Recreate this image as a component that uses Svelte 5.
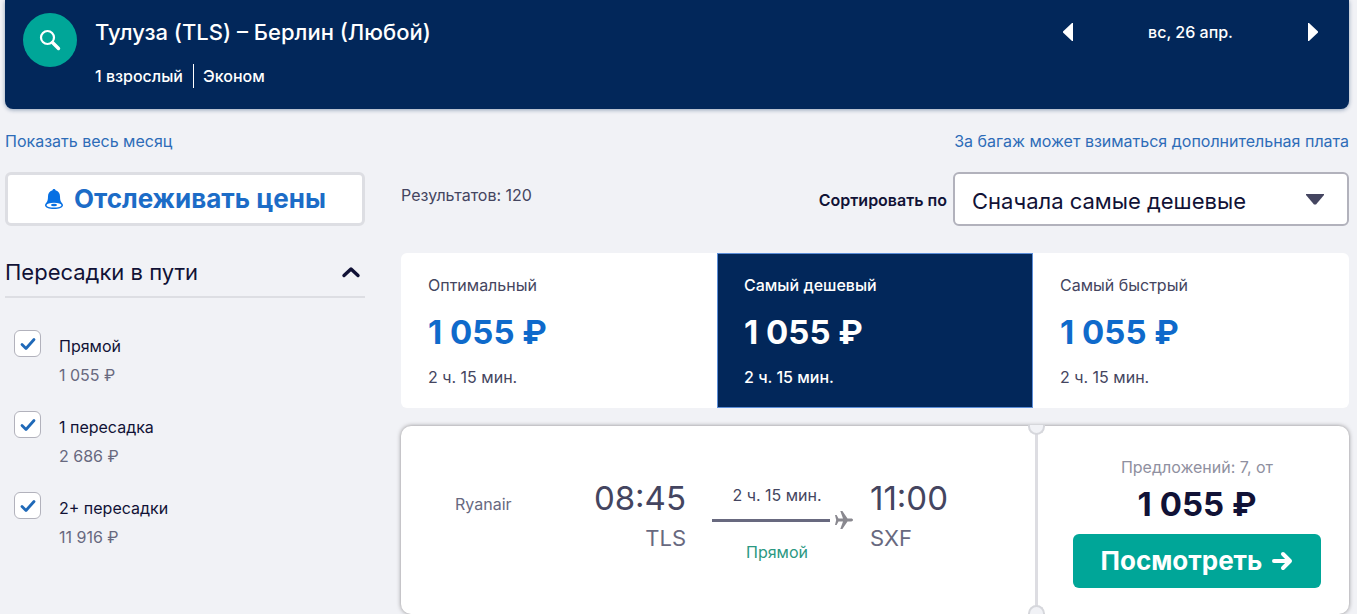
<script lang="ts">
	interface Stop {
		id: string;
		label: string;
		price: string;
		checked: boolean;
	}

	let stops: Stop[] = $state([
		{ id: 'direct', label: 'Прямой', price: '1 055 ₽', checked: true },
		{ id: 'one', label: '1 пересадка', price: '2 686 ₽', checked: true },
		{ id: 'two', label: '2+ пересадки', price: '11 916 ₽', checked: true }
	]);

	const tabs = [
		{ id: 'best', label: 'Оптимальный', price: '1 055 ₽', duration: '2 ч. 15 мин.' },
		{ id: 'cheapest', label: 'Самый дешевый', price: '1 055 ₽', duration: '2 ч. 15 мин.' },
		{ id: 'fastest', label: 'Самый быстрый', price: '1 055 ₽', duration: '2 ч. 15 мин.' }
	];

	let sort = $state('cheapest');
	let stopsOpen = $state(true);
</script>

<div class="page">
	<header class="search">
		<button class="search-btn" aria-label="Изменить поиск">
			<svg width="22" height="22" viewBox="0 0 22 22" fill="none" stroke="#fff">
				<circle cx="8.5" cy="8.5" r="6.5" stroke-width="2.2" />
				<path d="M13.5 13.5L19.5 19.5" stroke-width="3.4" stroke-linecap="round" />
			</svg>
		</button>
		<div class="trip">
			<h1>Тулуза (TLS) – Берлин (Любой)</h1>
			<p><span>1 взрослый</span><span class="cabin">Эконом</span></p>
		</div>
		<div class="date">
			<button aria-label="Предыдущий день">
				<svg width="12" height="20" viewBox="0 0 12 20"><path d="M11 1v18h-1L1 10.6V9.4L10 1z" fill="#fff" /></svg>
			</button>
			<span>вс, 26 апр.</span>
			<button aria-label="Следующий день">
				<svg width="12" height="20" viewBox="0 0 12 20"><path d="M1 1v18h1l9-8.400V9.400L2 1z" fill="#fff" /></svg>
			</button>
		</div>
	</header>

	<nav class="links">
		<a href="#month">Показать весь месяц</a>
		<a href="#baggage">За багаж может взиматься дополнительная плата</a>
	</nav>

	<div class="columns">
		<aside>
			<button class="track">
				<svg width="20" height="22" viewBox="0 0 20 22">
					<path
						d="M10 1c.9 0 1.500.6 1.500 1.300C14.800 3.200 16 5.800 16 8.500c0 4 .8 5.500 2.300 7 .5.600.7 1.200.7 1.700 0 2.200-4 3.800-9 3.800s-9-1.600-9-3.800c0-.5.2-1.100.7-1.700C3.200 14 4 12.500 4 8.500c0-2.700 1.200-5.300 4.500-6.200C8.500 1.600 9.100 1 10 1z"
						fill="#0770e3"
					/>
					<ellipse cx="10" cy="17.2" rx="7.5" ry="2.4" fill="#fff" />
					<ellipse cx="10" cy="17" rx="3" ry="1.3" fill="#0770e3" />
				</svg>
				Отслеживать цены
			</button>

			<button class="group" aria-expanded={stopsOpen} onclick={() => (stopsOpen = !stopsOpen)}>
				Пересадки в пути
				<svg class:closed={!stopsOpen} width="20" height="14" viewBox="0 0 20 14" fill="none">
					<path d="M3 10.500L10 4l7 6.500" stroke="#111236" stroke-width="3.4" stroke-linecap="round" stroke-linejoin="round" />
				</svg>
			</button>

			{#if stopsOpen}
				<ul class="stops">
					{#each stops as stop (stop.id)}
						<li>
							<input type="checkbox" id={stop.id} bind:checked={stop.checked} />
							<label for={stop.id}>
								{stop.label}
								<span>{stop.price}</span>
							</label>
						</li>
					{/each}
				</ul>
			{/if}
		</aside>

		<main>
			<div class="toolbar">
				<span class="count">Результатов: 120</span>
				<label for="sort">Сортировать по</label>
				<select id="sort" bind:value={sort}>
					<option value="best">Сначала оптимальные</option>
					<option value="cheapest">Сначала самые дешевые</option>
					<option value="fastest">Сначала самые быстрые</option>
				</select>
			</div>

			<div class="tabs">
				{#each tabs as tab (tab.id)}
					<button class="tab" class:active={sort === tab.id} onclick={() => (sort = tab.id)}>
						<span>{tab.label}</span>
						<strong>{tab.price}</strong>
						<span>{tab.duration}</span>
					</button>
				{/each}
			</div>

			<article class="ticket">
				<div class="flight">
					<span class="carrier">Ryanair</span>
					<div class="point departure">
						<time>08:45</time>
						<span>TLS</span>
					</div>
					<div class="route">
						<span class="duration">2 ч. 15 мин.</span>
						<div class="track-line">
							<i></i>
							<svg width="20" height="20" viewBox="0 0 20 20">
								<path
									d="M1 5h1.600L4.500 8.600H9L6.300 1h2.100l5.100 7.600h3.700c1 0 1.800.6 1.800 1.400s-.8 1.400-1.800 1.400h-3.700L8.400 19H6.300L9 11.400H4.500L2.600 15H1l1.200-5z"
									fill="#89888f"
								/>
							</svg>
						</div>
						<span class="direct">Прямой</span>
					</div>
					<div class="point">
						<time>11:00</time>
						<span>SXF</span>
					</div>
				</div>
				<div class="offer">
					<span>Предложений: 7, от</span>
					<strong>1 055 ₽</strong>
					<button>
						Посмотреть
						<svg width="22" height="20" viewBox="0 0 22 20" fill="none" stroke="#fff" stroke-width="4" stroke-linecap="round" stroke-linejoin="round">
							<path d="M3 10h15M12 3l7 7-7 7" />
						</svg>
					</button>
				</div>
			</article>
		</main>
	</div>
</div>

<style>
	:global(body) {
		background: #f1f2f6;
	}

	.page {
		padding: 0 8px 0 5px;
		font-family: Inter, 'Liberation Sans', sans-serif;
		font-size: 16px;
		line-height: 24px;
		color: #111236;
		overflow: hidden;
	}

	button {
		padding: 0;
		border: 0;
		background: none;
		color: inherit;
		font: inherit;
		cursor: pointer;
	}

	svg {
		display: block;
		flex: none;
	}

	.search {
		display: flex;
		align-items: flex-start;
		gap: 18px;
		padding: 13px 30px 21px 18px;
		border-radius: 0 0 8px 8px;
		background: #02275a;
		box-shadow: 0 1px 4px rgba(2, 39, 90, 0.4);
		color: #fff;
	}

	.search-btn {
		display: flex;
		align-items: center;
		justify-content: center;
		width: 54px;
		height: 54px;
		border-radius: 50%;
		background: #00a698;
	}

	.trip {
		flex: 1;
	}

	h1 {
		margin: 3px 0 16px;
		font-size: 22px;
		line-height: 32px;
		font-weight: 500;
	}

	.trip p {
		display: flex;
		margin: 0;
		font-weight: 500;
	}

	.cabin {
		margin-left: 10px;
		padding-left: 9px;
		border-left: 1px solid #fff;
	}

	.date {
		display: flex;
		align-items: center;
		justify-content: space-between;
		width: 257px;
		margin-top: 7px;
		font-weight: 500;
	}

	.links {
		display: flex;
		justify-content: space-between;
		padding: 20px 0 19px;
	}

	.links a {
		color: #2d6cb8;
		text-decoration: none;
	}

	.columns {
		display: flex;
		gap: 36px;
	}

	aside {
		flex: none;
		width: 360px;
	}

	.track {
		display: flex;
		align-items: center;
		justify-content: center;
		gap: 10px;
		width: 100%;
		height: 54px;
		border: 3px solid #dddee3;
		border-radius: 6px;
		background: #fff;
		color: #1c6cc7;
		font-size: 26px;
		font-weight: 700;
	}

	.group {
		display: flex;
		align-items: center;
		justify-content: space-between;
		width: 100%;
		margin-top: 20px;
		padding: 11px 4px 9px 0;
		border-bottom: 2px solid #dddee3;
		font-size: 22px;
		line-height: 30px;
	}

	.closed {
		transform: rotate(180deg);
	}

	.stops {
		display: flex;
		flex-direction: column;
		gap: 24px;
		margin: 0;
		padding: 32px 0 0 9px;
		list-style: none;
	}

	.stops li {
		display: flex;
		gap: 18px;
	}

	.stops input {
		appearance: none;
		flex: none;
		width: 27px;
		height: 27px;
		margin: 0;
		border: 1px solid #b2b2bc;
		border-radius: 6px;
		background: #fff;
	}

	.stops input:checked {
		background: #fff
			url("data:image/svg+xml,%3Csvg xmlns='http://www.w3.org/2000/svg' viewBox='0 0 18 16'%3E%3Cpath d='M3 8.5l4 4L15 3.5' fill='none' stroke='%231f69b8' stroke-width='2.8' stroke-linecap='round' stroke-linejoin='round'/%3E%3C/svg%3E")
			center / 18px 16px no-repeat;
	}

	.stops label {
		padding-top: 4px;
	}

	.stops label span {
		display: block;
		margin-top: 5px;
		color: #68697f;
	}

	.toolbar {
		display: flex;
		align-items: center;
		gap: 6px;
	}

	main {
		flex: 1;
		min-width: 0;
	}

	.count {
		flex: 1;
		align-self: flex-start;
		margin-top: 11px;
		color: #444560;
	}

	.toolbar label {
		padding-top: 2px;
		font-weight: 600;
	}

	select {
		appearance: none;
		width: 396px;
		height: 54px;
		padding: 3px 48px 0 17px;
		border: 2px solid #b2b2bc;
		border-radius: 6px;
		background: #fff
			url("data:image/svg+xml,%3Csvg xmlns='http://www.w3.org/2000/svg' viewBox='0 0 20 11'%3E%3Cpath d='M1 0h18v1L11 10.500H9L1 1z' fill='%23444560'/%3E%3C/svg%3E")
			right 22px center / 20px 11px no-repeat;
		color: #111236;
		font: inherit;
		font-size: 22px;
	}

	.tabs {
		display: flex;
		margin: 27px 0 18px;
		border-radius: 6px;
		background: #fff;
	}

	.tab {
		display: flex;
		flex: 1;
		flex-direction: column;
		padding: 19px 26px 18px;
		border: 1px solid transparent;
		color: #444560;
		text-align: left;
	}

	.tab strong {
		margin: 15px 0 13px;
		color: #0f6acb;
		font-size: 33px;
		line-height: 40px;
		font-weight: 700;
	}

	.tab.active {
		border-color: #5c8ed8;
		background: #02275a;
		color: #fff;
		font-weight: 500;
	}

	.tab.active strong {
		color: #fff;
	}

	.ticket {
		display: flex;
		height: 188px;
		border-radius: 10px;
		background: #fff;
		box-shadow: 0 0 4px rgba(37, 32, 31, 0.5);
	}

	.flight {
		display: flex;
		flex: 1;
		padding: 52px 87px 0 54px;
	}

	.carrier {
		flex: 1;
		margin-top: 14px;
		color: #68697f;
	}

	.point {
		display: flex;
		flex-direction: column;
		color: #68697f;
		font-size: 22px;
		line-height: 32px;
	}

	.point time {
		margin-bottom: 4px;
		color: #444560;
		font-size: 33px;
		line-height: 40px;
	}

	.departure {
		text-align: right;
	}

	.route {
		width: 142px;
		margin: 5px 16px 0 26px;
	}

	.duration,
	.direct {
		display: block;
		padding-right: 12px;
		color: #444560;
		text-align: center;
	}

	.track-line {
		display: flex;
		align-items: center;
		gap: 4px;
		margin: 3px 0 10px;
	}

	.track-line i {
		flex: 1;
		height: 3px;
		background: #68697f;
	}

	.direct {
		color: #2b9882;
	}

	.offer {
		display: flex;
		position: relative;
		flex-direction: column;
		align-items: center;
		width: 248px;
		padding: 29px 28px 0 35px;
		border-left: 3px solid #dddde2;
		color: #8f90a0;
	}

	/* punched holes at both ends of the tear line */
	.offer::before,
	.offer::after {
		content: '';
		position: absolute;
		left: -10px;
		width: 13px;
		height: 8px;
		border: 2px solid #d6d7dc;
		background: #f1f2f6;
	}

	.offer::before {
		top: -1px;
		border-top: 0;
		border-radius: 0 0 9px 9px;
	}

	.offer::after {
		bottom: -1px;
		border-bottom: 0;
		border-radius: 9px 9px 0 0;
	}

	.offer strong {
		margin: 5px 0 10px;
		color: #111236;
		font-size: 33px;
		line-height: 40px;
	}

	.offer button {
		display: flex;
		align-items: center;
		justify-content: center;
		gap: 9px;
		width: 100%;
		height: 54px;
		border-radius: 6px;
		background: #00a698;
		color: #fff;
		font-size: 26px;
		font-weight: 700;
	}
</style>
